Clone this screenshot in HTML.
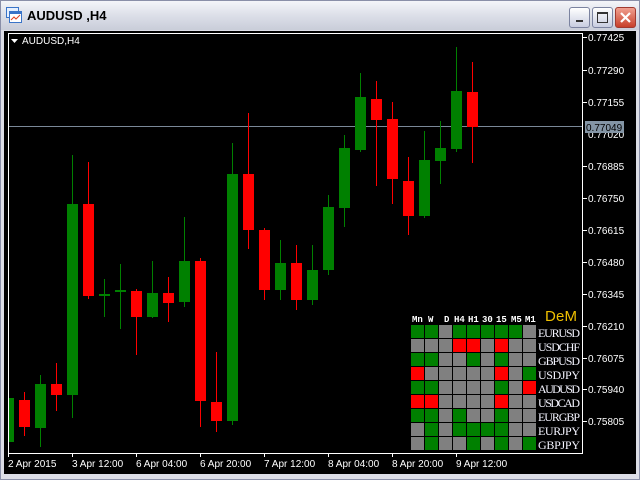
<!DOCTYPE html>
<html><head><meta charset="utf-8"><style>
body{margin:0;width:640px;height:480px;overflow:hidden;background:#d4d0c8;font-family:"Liberation Sans",sans-serif}
.win{position:absolute;left:0;top:0;width:638px;height:478px;border:1px solid #8a8fa8;background:#dcdde6}
.title{position:absolute;left:0;top:0;width:638px;height:29px;background:linear-gradient(#f4f5f9,#dcdfe8 50%,#c9cdd9)}
.title span{position:absolute;left:26px;top:7px;font-size:13px;font-weight:bold;color:#000}
.btn{position:absolute;top:6px;width:19px;height:19px;border:1px solid #7b83a0;border-radius:3px;background:linear-gradient(#fff,#c8cde0)}
</style></head><body>
<div class="win">
<div class="title">
<svg style="position:absolute;left:5px;top:6px" width="16" height="16"><rect x="0.5" y="0.5" width="12" height="10" fill="#e6f0ff" stroke="#3a74c8"/><rect x="3.5" y="4.5" width="12" height="11" fill="#fff" stroke="#3a74c8"/><rect x="4" y="5" width="11" height="2" fill="#3a74c8"/><path d="M5 13 L8 10 L10 12 L14 8" stroke="#e04020" fill="none"/></svg>
<span>AUDUSD ,H4</span>
<div class="btn" style="left:568px"><div style="position:absolute;left:6px;top:12px;width:7px;height:2px;background:#333"></div></div>
<div class="btn" style="left:591px"><div style="position:absolute;left:4px;top:4px;width:9px;height:8px;border:1px solid #333;border-top-width:2px"></div></div>
<div class="btn" style="left:614px;background:linear-gradient(#f0a090,#c8402a);border-color:#a03a30"><svg width="19" height="19"><path d="M5 5L14 14M14 5L5 14" stroke="#fff" stroke-width="2.2"/></svg></div>
</div>
</div>
<svg style="position:absolute;left:0;top:0" width="640" height="480" font-family="Liberation Sans, sans-serif">
<rect x="4" y="31" width="632" height="443" fill="#000"/>
<rect x="8.5" y="33.5" width="574" height="420" fill="none" stroke="#fff"/>
<line x1="9" y1="126.5" x2="582" y2="126.5" stroke="#7a8898"/>
<path d="M11 39h7l-3.5 4z" fill="#fff"/>
<text x="22" y="44" font-size="10" fill="#fff">AUDUSD,H4</text>
<g stroke-width="1">
<g fill="#008000" stroke="#008000">
<rect x="9" y="398" width="5" height="44" stroke="none"/>
<line x1="40.5" y1="375" x2="40.5" y2="447"/><rect x="35" y="384" width="11" height="44" stroke="none"/>
<line x1="72.5" y1="155" x2="72.5" y2="418"/><rect x="67" y="204" width="11" height="191" stroke="none"/>
<line x1="104.5" y1="279" x2="104.5" y2="317"/><rect x="99" y="294" width="11" height="2" stroke="none"/>
<line x1="120.5" y1="264" x2="120.5" y2="329"/><rect x="115" y="290" width="11" height="2" stroke="none"/>
<line x1="152.5" y1="261" x2="152.5" y2="318"/><rect x="147" y="293" width="11" height="24" stroke="none"/>
<line x1="184.5" y1="217" x2="184.5" y2="307"/><rect x="179" y="261" width="11" height="41" stroke="none"/>
<line x1="232.5" y1="143" x2="232.5" y2="425"/><rect x="227" y="174" width="11" height="247" stroke="none"/>
<line x1="280.5" y1="240" x2="280.5" y2="300"/><rect x="275" y="263" width="11" height="27" stroke="none"/>
<line x1="312.5" y1="245" x2="312.5" y2="305"/><rect x="307" y="270" width="11" height="30" stroke="none"/>
<line x1="328.5" y1="195" x2="328.5" y2="275"/><rect x="323" y="207" width="11" height="63" stroke="none"/>
<line x1="344.5" y1="135" x2="344.5" y2="227"/><rect x="339" y="148" width="11" height="60" stroke="none"/>
<line x1="360.5" y1="73" x2="360.5" y2="152"/><rect x="355" y="97" width="11" height="53" stroke="none"/>
<line x1="424.5" y1="131" x2="424.5" y2="218"/><rect x="419" y="160" width="11" height="56" stroke="none"/>
<line x1="440.5" y1="121" x2="440.5" y2="184"/><rect x="435" y="148" width="11" height="13" stroke="none"/>
<line x1="456.5" y1="47" x2="456.5" y2="152"/><rect x="451" y="91" width="11" height="58" stroke="none"/>
</g>
<g fill="#ff0000" stroke="#ff0000">
<line x1="24.5" y1="392" x2="24.5" y2="436"/><rect x="19" y="400" width="11" height="27" stroke="none"/>
<line x1="56.5" y1="363" x2="56.5" y2="411"/><rect x="51" y="384" width="11" height="11" stroke="none"/>
<line x1="88.5" y1="162" x2="88.5" y2="299"/><rect x="83" y="204" width="11" height="92" stroke="none"/>
<line x1="136.5" y1="289" x2="136.5" y2="355"/><rect x="131" y="291" width="11" height="26" stroke="none"/>
<line x1="168.5" y1="277" x2="168.5" y2="322"/><rect x="163" y="293" width="11" height="10" stroke="none"/>
<line x1="200.5" y1="258" x2="200.5" y2="427"/><rect x="195" y="261" width="11" height="140" stroke="none"/>
<line x1="216.5" y1="352" x2="216.5" y2="432"/><rect x="211" y="402" width="11" height="19" stroke="none"/>
<line x1="248.5" y1="113" x2="248.5" y2="249"/><rect x="243" y="174" width="11" height="56" stroke="none"/>
<line x1="264.5" y1="228" x2="264.5" y2="300"/><rect x="259" y="230" width="11" height="60" stroke="none"/>
<line x1="296.5" y1="245" x2="296.5" y2="310"/><rect x="291" y="263" width="11" height="37" stroke="none"/>
<line x1="376.5" y1="81" x2="376.5" y2="186"/><rect x="371" y="99" width="11" height="21" stroke="none"/>
<line x1="392.5" y1="102" x2="392.5" y2="204"/><rect x="387" y="119" width="11" height="60" stroke="none"/>
<line x1="408.5" y1="157" x2="408.5" y2="235"/><rect x="403" y="181" width="11" height="35" stroke="none"/>
<line x1="472.5" y1="62" x2="472.5" y2="163"/><rect x="467" y="92" width="11" height="35" stroke="none"/>
</g>
</g>
<g fill="#fff" font-size="10">
<g stroke="#fff"><line x1="583" y1="37.5" x2="587" y2="37.5"/><line x1="583" y1="70.5" x2="587" y2="70.5"/><line x1="583" y1="102.5" x2="587" y2="102.5"/><line x1="583" y1="166.5" x2="587" y2="166.5"/><line x1="583" y1="198.5" x2="587" y2="198.5"/><line x1="583" y1="230.5" x2="587" y2="230.5"/><line x1="583" y1="262.5" x2="587" y2="262.5"/><line x1="583" y1="294.5" x2="587" y2="294.5"/><line x1="583" y1="326.5" x2="587" y2="326.5"/><line x1="583" y1="358.5" x2="587" y2="358.5"/><line x1="583" y1="389.5" x2="587" y2="389.5"/><line x1="583" y1="421.5" x2="587" y2="421.5"/>
<line x1="8.5" y1="453" x2="8.5" y2="457"/><line x1="72.5" y1="453" x2="72.5" y2="457"/><line x1="136.5" y1="453" x2="136.5" y2="457"/><line x1="200.5" y1="453" x2="200.5" y2="457"/><line x1="264.5" y1="453" x2="264.5" y2="457"/><line x1="328.5" y1="453" x2="328.5" y2="457"/><line x1="392.5" y1="453" x2="392.5" y2="457"/><line x1="456.5" y1="453" x2="456.5" y2="457"/></g>
<text x="588" y="41">0.77425</text><text x="588" y="74">0.77290</text><text x="588" y="106">0.77155</text><text x="588" y="138">0.77020</text><text x="588" y="170">0.76885</text><text x="588" y="202">0.76750</text><text x="588" y="234">0.76615</text><text x="588" y="266">0.76480</text><text x="588" y="298">0.76345</text><text x="588" y="330">0.76210</text><text x="588" y="362">0.76075</text><text x="588" y="393">0.75940</text><text x="588" y="425">0.75805</text>
<rect x="585" y="121" width="39" height="12" fill="#8495a5"/><text x="586" y="131" fill="#000">0.77049</text>
<text x="8" y="467">2 Apr 2015</text><text x="72" y="467">3 Apr 12:00</text><text x="136" y="467">6 Apr 04:00</text><text x="200" y="467">6 Apr 20:00</text><text x="264" y="467">7 Apr 12:00</text><text x="328" y="467">8 Apr 04:00</text><text x="392" y="467">8 Apr 20:00</text><text x="456" y="467">9 Apr 12:00</text>
</g>
<g font-size="9" font-weight="bold" fill="#fff" font-family="Liberation Mono, monospace"><text x="412" y="322">Mn</text><text x="428" y="322">W</text><text x="444" y="322">D</text><text x="454" y="322">H4</text><text x="468" y="322">H1</text><text x="482" y="322">30</text><text x="496" y="322">15</text><text x="511" y="322">M5</text><text x="525" y="322">M1</text></g>
<text x="545" y="321" font-size="15" fill="#f0c000" textLength="32">DeM</text>
<g font-family="Liberation Serif, serif" font-size="12" fill="#f4f4ff">
<text x="538" y="337" textLength="42">EURUSD</text><text x="538" y="351" textLength="42">USDCHF</text><text x="538" y="365" textLength="42">GBPUSD</text><text x="538" y="379" textLength="42">USDJPY</text><text x="538" y="393" textLength="42">AUDUSD</text><text x="538" y="407" textLength="42">USDCAD</text><text x="538" y="421" textLength="42">EURGBP</text><text x="538" y="435" textLength="42">EURJPY</text><text x="538" y="449" textLength="42">GBPJPY</text>
</g>
</svg>
<svg style="position:absolute;left:0;top:0" width="640" height="480">
<g transform="translate(411,325)">
<g id="r"></g>
</g>
</svg>
<script>
var rows=["GGXGGGGGX","XXXRRXRXX","GGXXGXGXX","RXXXXXRXG","GGXXXXGXR","RRXXXXRXX","GGXGXXGXX","XGXGGGGXX","XGXXGXGXG"];
var c={G:"#008000",R:"#ff0000",X:"#808080"};var s="";
for(var i=0;i<9;i++)for(var j=0;j<9;j++)s+='<rect x="'+(j*14)+'" y="'+(i*14)+'" width="13" height="13" fill="'+c[rows[i][j]]+'"/>';
document.getElementById("r").innerHTML=s;
</script>
</body></html>
